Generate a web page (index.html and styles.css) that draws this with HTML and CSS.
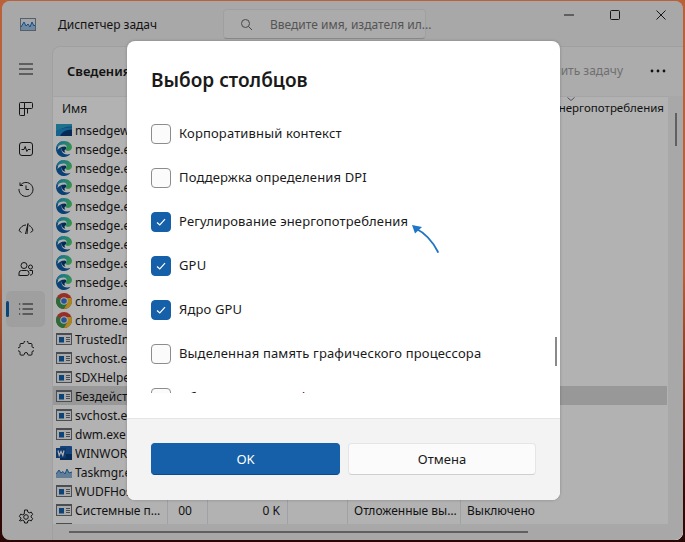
FILE: index.html
```html
<!DOCTYPE html>
<html lang="ru">
<head>
<meta charset="utf-8">
<title>Диспетчер задач</title>
<link rel="stylesheet" href="styles.css">
</head>
<body>
<svg class="defs" width="0" height="0" aria-hidden="true">
  <defs>
    <linearGradient id="eg" x1="0" y1="0" x2="1" y2="0.6"><stop offset="0" stop-color="#1b9de2"/><stop offset="1" stop-color="#4fd36f"/></linearGradient>
    <symbol id="i-edge" viewBox="0 0 16 16">
      <path d="M8 0A8 8 0 1 0 14.500 12.700C11.500 14.200 8 13.500 6.500 11.500 5 9.500 5.500 7 7 5.500 5 6 3 7 1.500 9 2 4 5 0 8 0z" fill="#0f5fa8"/>
      <path d="M5.500 6.500c2-1.500 4.500-1.500 5 .5 .2.8-.3 1.400-1.500 1.800-.8.6-.5 2 .5 3-1.500 0-3-1-3.500-2.500-.4-1-.6-2-.5-2.800z" fill="#0a3d78"/>
      <path d="M8 0C3.500 0 1 3.500 .8 6.500 2.500 4.500 5 3.500 7.500 3.500c2.500 0 3.500 1.500 3 3.500-.2.8-.8 1.400-1.500 1.800 1 1.200 3.500 1.500 5 .7 1.300-.7 2-2 2-3.400C16 3 12.500 0 8 0z" fill="url(#eg)"/>
    </symbol>
    <symbol id="i-chrome" viewBox="0 0 16 16">
      <circle cx="8" cy="8" r="8" fill="#d9433a"/>
      <path d="M8 8 1.100 4 .0 8c0 4.400 3.400 8 7.500 8l3.500-3z" fill="#3d9b52"/>
      <path d="M8 5h7.400c.4 1 .6 2 .6 3 0 4.400-3.600 8-8 8l3.500-6z" fill="#f2c230"/>
      <circle cx="8" cy="8" r="3.800" fill="#f5f5f5"/>
      <circle cx="8" cy="8" r="2.800" fill="#3b78d8"/>
    </symbol>
    <symbol id="i-app" viewBox="0 0 16 12">
      <rect x=".5" y=".5" width="15" height="11" fill="#f2f2f2" stroke="#6a7078"/>
      <rect x="0" y="0" width="16" height="2" fill="#6a7078"/>
      <rect x="3" y="4" width="5" height="5.500" fill="#0f62ad"/>
      <path d="M10 4.500h4M10 6.500h4M10 8.500h4" stroke="#6a7078" stroke-width="1"/>
    </symbol>
    <symbol id="i-webview" viewBox="0 0 16 12">
      <rect width="16" height="12" fill="#0f62ad"/>
      <path d="M0 0h16v2.500C10 2.500 4 4.500 0 8z" fill="#2aa4c8"/>
      <path d="M4 12c2-4 7-6.500 12-6.500V12z" fill="#0a3d78"/>
      <path d="M0 8c3-3 8-4.500 16-4.500v2C10 5.500 6 7.500 4 12H0z" fill="#1f8fd0"/>
    </symbol>
    <symbol id="i-word" viewBox="0 0 16 16">
      <rect x="4" y="1" width="12" height="14" rx="1" fill="#1f5fb0"/>
      <rect x="4" y="9" width="12" height="6" fill="#0a3d78"/>
      <rect x="0" y="3" width="10" height="10" fill="#14529e"/>
      <path d="M2 5.500l1.200 5 1.800-4 1.800 4L8 5.500" fill="none" stroke="#fff" stroke-width="1.200"/>
    </symbol>
    <symbol id="i-tm" viewBox="0 0 16 12">
      <path d="M0 12V8l3-4 2 3 2-1.500L9 8l2-5 2 4 3-1v6z" fill="#8db4d8"/>
      <path d="M0 8l3-4 2 3 2-1.500L9 8l2-5 2 4 3-1" fill="none" stroke="#2a70b8"/>
    </symbol>
  </defs>
</svg>

<div class="window">
  <header class="titlebar">
    <svg class="logo" width="16" height="13" viewBox="0 0 16 13"><rect x=".5" y=".5" width="15" height="12" fill="#e8eef5" stroke="#7a8894"/><path d="M1 12V9l3-5 2 4 2-2 2 3 2-5 2 4 1-1v5z" fill="#9fc3e4"/><path d="M1 9l3-5 2 4 2-2 2 3 2-5 2 4 1-1" fill="none" stroke="#1f6fc0"/></svg>
    <span class="app-title">Диспетчер задач</span>
    <div class="search">
      <svg class="search-ic" width="13" height="13" viewBox="0 0 13 13"><circle cx="5.500" cy="5.500" r="4" fill="none" stroke="#666" stroke-width="1"/><path d="M8.500 8.500l3.500 3.500" stroke="#666"/></svg>
      <span>Введите имя, издателя ил...</span>
    </div>
    <div class="win-btns">
      <svg width="12" height="12" viewBox="0 0 12 12"><path d="M1 6h10" stroke="#222"/></svg>
      <svg width="12" height="12" viewBox="0 0 12 12"><rect x="1.500" y="1.500" width="9" height="9" rx="1" fill="none" stroke="#222"/></svg>
      <svg width="12" height="12" viewBox="0 0 12 12"><path d="M1.500 1.500l9 9M10.500 1.500l-9 9" stroke="#222"/></svg>
    </div>
  </header>

  <div class="main">
    <nav class="sidebar">
      <div class="nav-item"><svg class="ic" viewBox="0 0 16 16"><path d="M1 3h14M1 8h14M1 13h14"/></svg></div>
      <div class="nav-item"><svg class="ic" viewBox="0 0 16 16"><path d="M1.500 2.500a1 1 0 0 1 1-1h4v6h-5zM6.500 1.500h7a1 1 0 0 1 1 1v4a1 1 0 0 1-1 1h-7M1.500 7.500h5v7h-4a1 1 0 0 1-1-1zM6.500 7.500h3v5"/></svg></div>
      <div class="nav-item"><svg class="ic" viewBox="0 0 16 16"><rect x="1.500" y="1.500" width="13" height="13" rx="2.500"/><path d="M3.500 8.500h2.500l1.200-3 1.600 5 1.200-2h2.500"/></svg></div>
      <div class="nav-item"><svg class="ic" viewBox="0 0 16 16"><path d="M2.200 4.500A7 7 0 1 1 1 8M2 1.500v3h3M8 4.500v4h3"/></svg></div>
      <div class="nav-item"><svg class="ic" viewBox="0 0 16 16"><path d="M1 9.500C2.500 6 5 4 8 4M11 4.500c2 .8 3.300 2.500 4 5M1 9.500l2.500 2M15 9.500l-2.500 2M7.500 13 10 2.500M9 13 10 2.500"/></svg></div>
      <div class="nav-item"><svg class="ic" viewBox="0 0 16 16"><circle cx="6" cy="4.500" r="3"/><circle cx="12.500" cy="6" r="2"/><path d="M1 14.500v-2.500a2.500 2.500 0 0 1 2.500-2.500h5a2.500 2.500 0 0 1 2.500 2.500v.5a2 2 0 0 1-2 2H3a2 2 0 0 1-2-.500zM11.500 9.500h3v2.500a2 2 0 0 1-2.500 2"/></svg></div>
      <div class="nav-item active"><span class="pip"></span><svg class="ic" viewBox="0 0 16 16"><path d="M4.500 3H15M4.500 8H15M4.500 13H15M1 3h1.200M1 8h1.200M1 13h1.200" stroke-width="1.200"/></svg></div>
      <div class="nav-item"><svg class="ic" viewBox="0 0 16 16"><path d="M6 1.500a2 2 0 0 1 4 0c0 .6.400 1 1 1h2a1 1 0 0 1 1 1v2c0 .6.500 1 1 1a1.800 1.800 0 0 1 0 3.600c-.5 0-1 .4-1 1v2a1 1 0 0 1-1 1h-2.500c-.5 0-.8-.4-.8-.9a1.700 1.700 0 0 0-3.400 0c0 .5-.3.900-.8.900H3a1 1 0 0 1-1-1v-2c0-.6-.4-1-1-1a1.800 1.800 0 0 1 0-3.600c.6 0 1-.4 1-1v-2a1 1 0 0 1 1-1h2c.6 0 1-.4 1-1z"/></svg></div>
      <div class="nav-item settings"><svg class="ic" viewBox="0 0 16 16"><circle cx="8" cy="8" r="2.300"/><path d="M6.600 1h2.800l.4 2 1.500.8 2-.7 1.400 2.400-1.600 1.300v1.400l1.600 1.300-1.400 2.400-2-.7-1.500.8-.4 2H6.600l-.4-2-1.500-.8-2 .7L1.300 11.500l1.600-1.300V8.800L1.300 7.500 2.700 5.100l2 .7 1.500-.8z" stroke-linejoin="round"/></svg></div>
    </nav>

    <section class="panel">
      <div class="toolbar">
        <h2 class="tb-title">Сведения</h2>
        <span class="tb-action">Завершить задачу</span>
        <svg class="tb-more" width="16" height="4" viewBox="0 0 16 4"><circle cx="2" cy="2" r="1.400"/><circle cx="8" cy="2" r="1.400"/><circle cx="14" cy="2" r="1.400"/></svg>
      </div>
      <div class="tablewrap">
        <div class="table">
          <div class="row head">
            <span class="cell name hname">Имя</span><span class="cell cpu"></span><span class="cell mem"></span><span class="cell c4"></span><span class="cell c5"></span>
            <span class="cell c6 hlast"><svg class="chev" width="8" height="4" viewBox="0 0 8 4"><path d="M.5.500 4 3.500 7.500.500" fill="none" stroke="#777"/></svg>Регулирование энергопотребления</span>
          </div>
          <div class="rows">
            <div class="row"><span class="cell name"><svg class="fi" width="16" height="12"><use href="#i-webview"/></svg><span class="nm">msedgewebview2.exe</span></span></div>
            <div class="row"><span class="cell name"><svg class="fi" width="16" height="16"><use href="#i-edge"/></svg><span class="nm">msedge.exe</span></span></div>
            <div class="row"><span class="cell name"><svg class="fi" width="16" height="16"><use href="#i-edge"/></svg><span class="nm">msedge.exe</span></span></div>
            <div class="row"><span class="cell name"><svg class="fi" width="16" height="16"><use href="#i-edge"/></svg><span class="nm">msedge.exe</span></span></div>
            <div class="row"><span class="cell name"><svg class="fi" width="16" height="16"><use href="#i-edge"/></svg><span class="nm">msedge.exe</span></span></div>
            <div class="row"><span class="cell name"><svg class="fi" width="16" height="16"><use href="#i-edge"/></svg><span class="nm">msedge.exe</span></span></div>
            <div class="row"><span class="cell name"><svg class="fi" width="16" height="16"><use href="#i-edge"/></svg><span class="nm">msedge.exe</span></span></div>
            <div class="row"><span class="cell name"><svg class="fi" width="16" height="16"><use href="#i-edge"/></svg><span class="nm">msedge.exe</span></span></div>
            <div class="row"><span class="cell name"><svg class="fi" width="16" height="16"><use href="#i-edge"/></svg><span class="nm">msedge.exe</span></span></div>
            <div class="row"><span class="cell name"><svg class="fi" width="16" height="16"><use href="#i-chrome"/></svg><span class="nm">chrome.exe</span></span></div>
            <div class="row"><span class="cell name"><svg class="fi" width="16" height="16"><use href="#i-chrome"/></svg><span class="nm">chrome.exe</span></span></div>
            <div class="row"><span class="cell name"><svg class="fi" width="16" height="12"><use href="#i-app"/></svg><span class="nm">TrustedInstaller.exe</span></span></div>
            <div class="row"><span class="cell name"><svg class="fi" width="16" height="12"><use href="#i-app"/></svg><span class="nm">svchost.exe</span></span></div>
            <div class="row"><span class="cell name"><svg class="fi" width="16" height="12"><use href="#i-app"/></svg><span class="nm">SDXHelper.exe</span></span></div>
            <div class="row selected"><span class="cell name"><svg class="fi" width="16" height="12"><use href="#i-app"/></svg><span class="nm">Бездействие системы</span></span></div>
            <div class="row"><span class="cell name"><svg class="fi" width="16" height="12"><use href="#i-app"/></svg><span class="nm">svchost.exe</span></span></div>
            <div class="row"><span class="cell name"><svg class="fi" width="16" height="12"><use href="#i-app"/></svg><span class="nm">dwm.exe</span></span></div>
            <div class="row"><span class="cell name"><svg class="fi" width="16" height="16"><use href="#i-word"/></svg><span class="nm">WINWORD.EXE</span></span></div>
            <div class="row"><span class="cell name"><svg class="fi" width="16" height="12"><use href="#i-tm"/></svg><span class="nm">Taskmgr.exe</span></span></div>
            <div class="row"><span class="cell name"><svg class="fi" width="16" height="12"><use href="#i-app"/></svg><span class="nm">WUDFHost.exe</span></span></div>
            <div class="row"><span class="cell name"><svg class="fi" width="16" height="12"><use href="#i-app"/></svg><span class="nm">Системные прерывания</span></span><span class="cell cpu val">00</span><span class="cell mem val">0 K</span><span class="cell c4"></span><span class="cell c5"><span class="nm">Отложенные вызовы</span></span><span class="cell c6 val">Выключено</span></div>
            <div class="row"><span class="cell name"><svg class="fi" width="16" height="12"><use href="#i-app"/></svg><span class="nm"></span></span><span class="cell cpu"></span><span class="cell mem"></span><span class="cell c4"></span><span class="cell c5"></span><span class="cell c6"></span></div>
          </div>
        </div>
        <div class="vscroll"><span class="vthumb"></span></div>
      </div>
      <div class="hscroll"><span class="hthumb"></span></div>
    </section>
  </div>
  <div class="scrim"></div>
</div>

<div class="dialog" role="dialog">
  <div class="dlg-body">
    <h1 class="dlg-title">Выбор столбцов</h1>
    <ul class="opts">
      <li class="opt"><span class="cb"></span><span class="lbl">Корпоративный контекст</span></li>
      <li class="opt"><span class="cb"></span><span class="lbl">Поддержка определения DPI</span></li>
      <li class="opt"><span class="cb on"><svg width="12" height="12" viewBox="0 0 12 12"><path d="M2 6.500 4.800 9 10 3.200" fill="none" stroke="#fff" stroke-width="1.200"/></svg></span><span class="lbl">Регулирование энергопотребления</span></li>
      <li class="opt"><span class="cb on"><svg width="12" height="12" viewBox="0 0 12 12"><path d="M2 6.500 4.800 9 10 3.200" fill="none" stroke="#fff" stroke-width="1.200"/></svg></span><span class="lbl">GPU</span></li>
      <li class="opt"><span class="cb on"><svg width="12" height="12" viewBox="0 0 12 12"><path d="M2 6.500 4.800 9 10 3.200" fill="none" stroke="#fff" stroke-width="1.200"/></svg></span><span class="lbl">Ядро GPU</span></li>
      <li class="opt"><span class="cb"></span><span class="lbl">Выделенная память графического процессора</span></li>
      <li class="opt"><span class="cb"></span><span class="lbl">Общая память графического процессора</span></li>
    </ul>
    <span class="dlg-thumb"></span>
    <svg class="arrow" width="32" height="34" viewBox="0 0 32 34"><path d="M29 31C25 23 18 13 6 7" fill="none" stroke="#1f76c4" stroke-width="1.800" stroke-linecap="round"/><path d="M3 4 13 6 6 12.500z" fill="#1f76c4"/></svg>
  </div>
  <div class="dlg-foot">
    <button class="btn primary" type="button">OK</button>
    <button class="btn" type="button">Отмена</button>
  </div>
</div>
</body>
</html>
```
FILE: styles.css
```css
* { box-sizing: border-box; }
html, body { margin: 0; padding: 0; }
body {
  position: relative;
  width: 685px;
  height: 542px;
  overflow: hidden;
  font-family: "Noto Sans", "Liberation Sans", sans-serif;
  font-size: 13px;
  color: #1a1a1a;
  background: linear-gradient(180deg, #b9623a 0%, #b9623a 50%, #8a3b22 68%, #3a0a06 90%, #2a0705 100%);
}
.defs { position: absolute; }
.window {
  position: absolute;
  left: 2px;
  top: 1px;
  width: 681px;
  height: 539px;
  border-radius: 8px;
  overflow: hidden;
  background: #f1f1f1;
  display: flex;
  flex-direction: column;
}
.scrim {
  position: absolute;
  inset: 0;
  background: rgba(0, 0, 0, .3);
}
.titlebar {
  height: 45px;
  flex: none;
  display: flex;
  align-items: flex-start;
  padding-left: 18px;
}
.logo { flex: none; margin-top: 17px; }
.app-title { margin: 15px 0 0 22px; font-size: 12px; line-height: 18px; width: 165px; flex: none; }
.search {
  width: 203px;
  height: 30px;
  margin-top: 8px;
  flex: none;
  display: flex;
  align-items: center;
  gap: 17px;
  padding-left: 16px;
  background: #f5f5f5;
  border: 1px solid #e6e6e6;
  border-bottom-color: #c4c4c4;
  border-radius: 4px;
  color: #7a7a7a;
  font-size: 12px;
  white-space: nowrap;
}
.search-ic { flex: none; }
.win-btns {
  margin-left: auto;
  margin-top: 8px;
  margin-right: 16px;
  display: flex;
  gap: 34px;
}
.main { flex: 1; display: flex; min-height: 0; }
.sidebar {
  width: 50px;
  flex: none;
  display: flex;
  flex-direction: column;
  gap: 4px;
  padding: 5px 0 5px 4px;
}
.nav-item {
  position: relative;
  width: 39px;
  height: 36px;
  display: flex;
  align-items: center;
  justify-content: center;
  border-radius: 5px;
}
.nav-item.active { background: #e4e4e4; }
.nav-item.settings { margin-top: auto; }
.pip {
  position: absolute;
  left: 0;
  top: 10px;
  width: 3px;
  height: 16px;
  border-radius: 2px;
  background: #0f62ad;
}
.ic {
  width: 16px;
  height: 16px;
  fill: none;
  stroke: #1e1e1e;
  stroke-width: 1;
}
.panel {
  flex: 1;
  min-width: 0;
  display: flex;
  flex-direction: column;
  background: #f7f7f7;
  border-top: 1px solid #e6e6e6;
  border-left: 1px solid #e6e6e6;
  border-top-left-radius: 8px;
}
.toolbar {
  height: 49px;
  flex: none;
  display: flex;
  align-items: center;
  padding: 0 17px 2px 14px;
}
.tb-title { margin: 0; font-size: 13px; font-weight: 600; }
.tb-action { margin-left: auto; color: #a0a0a0; font-size: 12px; }
.tb-more { margin-left: 27px; flex: none; fill: #1a1a1a; }
.tablewrap {
  flex: 1;
  min-height: 0;
  display: flex;
}
.table {
  flex: 1;
  min-width: 0;
  background: #fff;
  border-top: 1px solid #ececec;
  overflow: hidden;
}
.row {
  display: flex;
  height: 19px;
  align-items: center;
  white-space: nowrap;
  font-size: 12px;
}
.row.head { height: 23px; padding-bottom: 1px; }
.rows { display: flex; flex-direction: column; }
.row.selected { background: #dadada; width: 614px; }
.cell {
  height: 100%;
  display: flex;
  align-items: center;
  overflow: hidden;
  flex: none;
  border-right: 1px solid #e3e8ee;
}
.row.head .cell { border-right: 0; }
.row.selected .cell, .rows .row .cell.name { border-right-color: transparent; }
.rows .row:nth-last-child(-n+2) .cell.name { border-right-color: #e3e8ee; }
.name { width: 115px; padding-left: 3px; gap: 3px; }
.hname { padding-left: 9px; font-size: 12px; }
.fi { flex: none; }
.nm { overflow: hidden; text-overflow: ellipsis; white-space: nowrap; min-width: 0; padding-top: 1px; }
.val { padding-top: 1px; }
.cpu { width: 40px; justify-content: center; padding-right: 5px; }
.mem { width: 80px; justify-content: flex-end; padding-right: 7px; }
.c4 { width: 60px; }
.c5 { width: 113px; padding-left: 6px; }
.c6 { width: 207px; padding-left: 6px; border-right: 0; }
.hlast {
  position: relative;
  justify-content: flex-end;
  padding: 0 4px 2px 0;
  font-size: 11.5px;
  overflow: visible;
  width: 207px;
}
.chev { position: absolute; left: 106px; top: 0; }
.vscroll {
  width: 15px;
  flex: none;
  padding: 17px 0 0 7px;
  background: #f1f1f1;
}
.vthumb {
  display: block;
  width: 2px;
  height: 33px;
  background: #8a8a8a;
}
.hscroll {
  height: 16px;
  flex: none;
  padding: 7px 0 0 16px;
  background: #f1f1f1;
}
.hthumb {
  display: block;
  width: 459px;
  height: 2px;
  background: #8a8a8a;
}
.dialog {
  position: absolute;
  left: 127px;
  top: 41px;
  width: 433px;
  height: 459px;
  border-radius: 8px;
  overflow: hidden;
  background: #fff;
  box-shadow: 0 0 3px rgba(0, 0, 0, .25);
  display: flex;
  flex-direction: column;
}
.dlg-body {
  position: relative;
  flex: 1;
  padding: 25px 24px 25px;
  display: flex;
  flex-direction: column;
  min-height: 0;
}
.dlg-title {
  margin: 0 0 18px;
  font-size: 19px;
  line-height: 28px;
  font-weight: 600;
  color: #1a1a1a;
}
.opts {
  list-style: none;
  margin: 0;
  padding: 0;
  height: 281px;
  overflow: hidden;
}
.opt {
  height: 44px;
  display: flex;
  align-items: center;
  gap: 8px;
  font-size: 13px;
  color: #1a1a1a;
  white-space: nowrap;
}
.lbl { margin-top: -2px; letter-spacing: .15px; }
.cb {
  width: 20px;
  height: 20px;
  flex: none;
  border: 1px solid #8c8c8c;
  border-radius: 4px;
  background: #fbfbfb;
  display: flex;
  align-items: center;
  justify-content: center;
}
.cb.on { background: #1560a8; border-color: #1560a8; }
.dlg-thumb {
  position: absolute;
  left: 428px;
  top: 296px;
  width: 2px;
  height: 29px;
  background: #8a8a8a;
}
.arrow {
  position: absolute;
  left: 282px;
  top: 180px;
}
.dlg-foot {
  height: 82px;
  flex: none;
  display: flex;
  gap: 8px;
  padding: 24px 24px 0;
  background: #f3f3f3;
  border-top: 1px solid #e5e5e5;
}
.btn {
  width: 188px;
  height: 32px;
  font: inherit;
  font-size: 13px;
  color: #1a1a1a;
  background: #fbfbfb;
  border: 1px solid #e5e5e5;
  border-bottom-color: #cfcfcf;
  border-radius: 4px;
}
.btn.primary {
  width: 189px;
  color: #fff;
  background: #1560a8;
  border-color: #1560a8;
  border-bottom-color: #0c4a8a;
}
```
